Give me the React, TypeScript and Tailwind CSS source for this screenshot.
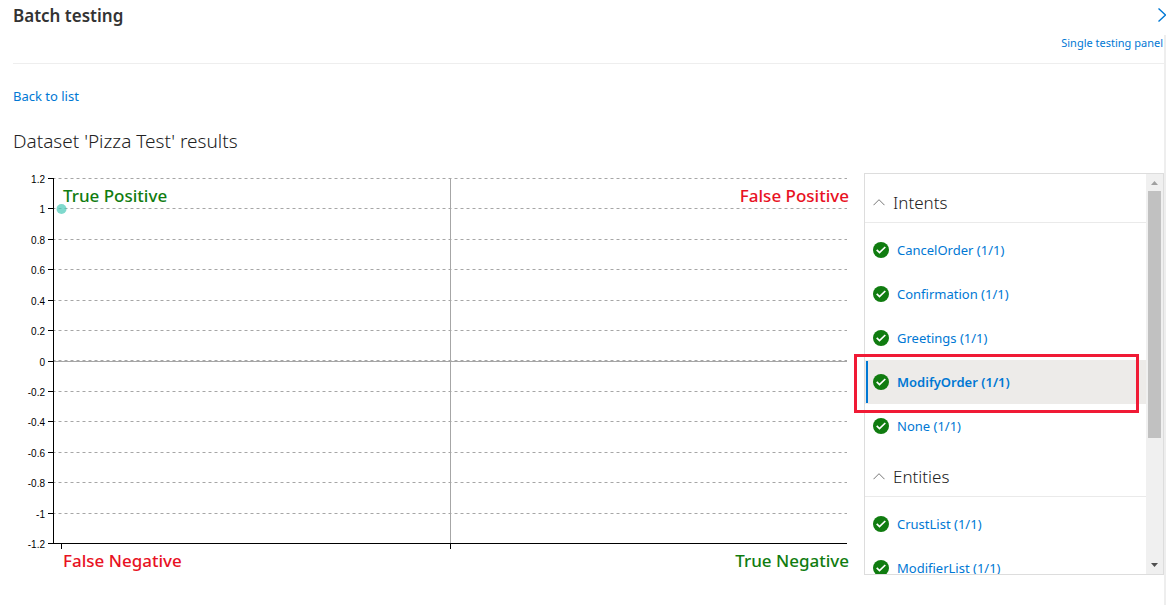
import { useState } from "react";

const TICKS = ["1.2", "1", "0.8", "0.6", "0.4", "0.2", "0", "-0.2", "-0.4", "-0.6", "-0.8", "-1", "-1.2"];
const PLOT_HEIGHT = 365;

const INTENTS = ["CancelOrder", "Confirmation", "Greetings", "ModifyOrder", "None"];
const ENTITIES = ["CrustList", "ModifierList"];

function tickY(index: number) {
  return Math.round((index * PLOT_HEIGHT) / (TICKS.length - 1)) + 0.5;
}

function PassedIcon() {
  return (
    <svg viewBox="0 0 16 16" className="size-4 shrink-0" aria-hidden="true">
      <circle cx="8" cy="8" r="8" fill="#107c10" />
      <path d="M3.7 7.900 6.500 10.600 12.300 5" fill="none" stroke="#fff" strokeWidth="1.7" />
    </svg>
  );
}

function Chart() {
  return (
    <section aria-label="Results chart" className="min-w-0 flex-1 pt-[5px] pl-10">
      <div className="relative mr-[15px]">
        <svg className="block h-[366px] w-[calc(100%-2px)] overflow-visible" shapeRendering="crispEdges">
          {TICKS.map((label, i) => (
            <g key={label}>
              <line
                x1="0"
                x2="100%"
                y1={tickY(i)}
                y2={tickY(i)}
                stroke={i === 12 ? "#000" : "#a6a6a6"}
                strokeDasharray={i === 6 || i === 12 ? undefined : "3 3"}
                strokeDashoffset={0.5}
                shapeRendering={i === 12 ? "crispEdges" : "auto"}
              />
              <line x1="-5" x2="0" y1={tickY(i)} y2={tickY(i)} stroke="#000" />
              <text
                x="-8"
                y={tickY(i) + 4}
                textAnchor="end"
                className="fill-black font-['Liberation_Sans',sans-serif] text-[10px]"
              >
                {label}
              </text>
            </g>
          ))}
          <line
            x1="0"
            x2="100%"
            y1="182.5"
            y2="182.5"
            stroke="#a6a6a6"
            strokeDasharray="3 3"
            strokeDashoffset={0.5}
            shapeRendering="auto"
          />
          <line x1="50%" x2="50%" y1="0" y2="365" stroke="#a6a6a6" />
          <line x1="50%" x2="50%" y1="366" y2="371" stroke="#000" />
          <line x1="8.5" x2="8.5" y1="366" y2="371" stroke="#000" />
          <line x1="0.5" x2="0.5" y1="0" y2="366" stroke="#000" />
          <circle cx="8.5" cy="31" r="5" fill="#48c9b8" fillOpacity="0.7" shapeRendering="auto" />
        </svg>
        <div className="absolute inset-x-0 top-1 flex justify-between pl-[10px] text-[17px] leading-7 font-medium">
          <span className="text-[#107c10]">True Positive</span>
          <span className="text-[#e81123]">False Positive</span>
        </div>
        <div className="flex justify-between pt-[3px] pl-[10px] text-[17px] leading-7 font-medium">
          <span className="text-[#e81123]">False Negative</span>
          <span className="text-[#107c10]">True Negative</span>
        </div>
      </div>
    </section>
  );
}

interface GroupProps {
  title: string;
  items: string[];
  selected: string;
  onSelect: (item: string) => void;
}

function Group({ title, items, selected, onSelect }: GroupProps) {
  const [open, setOpen] = useState(true);
  return (
    <section>
      <h3 className="border-b border-[#eaeaea] pt-4 pb-[6px]">
        <button
          type="button"
          aria-expanded={open}
          onClick={() => setOpen(!open)}
          className="flex w-full items-center gap-2 pl-2 text-left text-[17px] leading-[26px] font-light text-[#222]"
        >
          <svg viewBox="0 0 12 12" className="size-3" fill="none" stroke="#777" aria-hidden="true">
            <path d="M0.5 8.2 6 2.7 11.5 8.2" />
          </svg>
          {title}
        </button>
      </h3>
      {open && (
        <ul className="pt-[5px]">
          {items.map((item) => (
            <li key={item}>
              <button
                type="button"
                onClick={() => onSelect(item)}
                className={
                  item === selected
                    ? "relative flex h-11 w-full items-center gap-2 bg-[#edebe9] pl-2 text-left text-[13px] leading-[21px] font-semibold text-[#0078d4] before:absolute before:inset-y-px before:left-px before:w-[2px] before:bg-[#0078d4]"
                    : "flex h-11 w-full items-center gap-2 pl-2 text-left text-[13px] leading-[21px] text-[#0078d4]"
                }
              >
                <PassedIcon />
                {item} (1/1)
              </button>
            </li>
          ))}
        </ul>
      )}
    </section>
  );
}

function Scrollbar() {
  return (
    <div className="flex w-[17px] shrink-0 flex-col items-center bg-[#f0f0f0]" aria-hidden="true">
      <svg viewBox="0 0 17 17" className="size-[17px]">
        <path d="M5 11h7L8.500 7z" fill="#a0a0a0" />
      </svg>
      <div className="h-[247px] w-[13px] bg-[#c1c1c1]" />
      <svg viewBox="0 0 17 17" className="mt-auto size-[17px]">
        <path d="M5 6h7L8.500 10z" fill="#505050" />
      </svg>
    </div>
  );
}

export default function App() {
  const [selected, setSelected] = useState("ModifyOrder");
  return (
    <main className="flex min-h-screen flex-col overflow-hidden bg-white pl-[13px] font-['Noto_Sans','Open_Sans',sans-serif] text-[#333]">
      <header className="flex h-[35px] items-start justify-between">
        <h1 className="pt-1 text-[17px] leading-6 font-semibold">Batch testing</h1>
        <button type="button" aria-label="Collapse panel" className="pt-2">
          <svg viewBox="0 0 8 14" className="h-[14px] w-2" fill="none" stroke="#0078d4" strokeWidth="1.4">
            <path d="M0.500 0.500 7.500 7 0.500 13.500" />
          </svg>
        </button>
      </header>
      <div className="flex-1 border-r-2 border-[#eee]">
        <div className="border-b border-[#eee] pr-px pb-3 text-right text-[11px] leading-4">
          <a href="#single" className="text-[#0078d4]">Single testing panel</a>
        </div>
        <nav className="mt-[23px] text-[13px] leading-[18px]">
          <a href="#list" className="text-[#0078d4]">Back to list</a>
        </nav>
        <h2 className="mt-[22px] text-[19px] leading-7 font-light text-[#222]">Dataset 'Pizza Test' results</h2>
        <div className="mt-[18px] flex items-start">
          <Chart />
          <aside className="relative w-[300px] shrink-0">
            <div className="flex h-[402px] border border-[#ddd]">
              <div className="min-w-0 flex-1 overflow-hidden">
                <Group title="Intents" items={INTENTS} selected={selected} onSelect={setSelected} />
                <Group title="Entities" items={ENTITIES} selected={selected} onSelect={setSelected} />
              </div>
              <Scrollbar />
            </div>
            <div className="pointer-events-none absolute top-[181px] right-[25px] -left-[10px] h-[59px] border-3 border-[#f01a35]" />
          </aside>
        </div>
      </div>
    </main>
  );
}
